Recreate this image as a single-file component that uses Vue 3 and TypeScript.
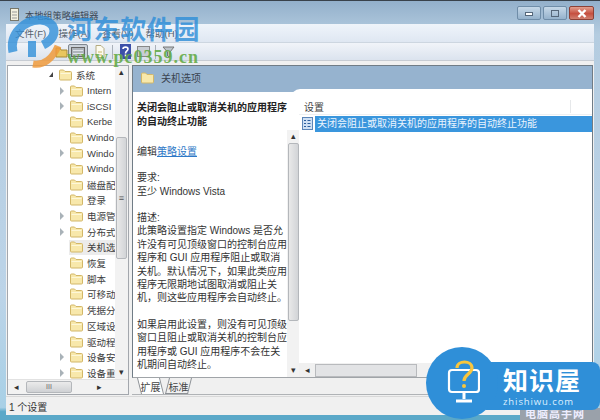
<script setup lang="ts">
type Row = { label: string; arrow?: boolean; open?: boolean; selected?: boolean }
const rows: Row[] = [
  { label: '系统', open: true },
  { label: 'Intern', arrow: true },
  { label: 'iSCSI', arrow: true },
  { label: 'Kerbe' },
  { label: 'Windo' },
  { label: 'Windo', arrow: true },
  { label: 'Windo' },
  { label: '磁盘配' },
  { label: '登录' },
  { label: '电源管', arrow: true },
  { label: '分布式', arrow: true },
  { label: '关机选', selected: true },
  { label: '恢复' },
  { label: '脚本' },
  { label: '可移动' },
  { label: '凭据分' },
  { label: '区域设' },
  { label: '驱动程' },
  { label: '设备安', arrow: true },
  { label: '设备重', arrow: true },
]
const menus = ['文件(F)', '操作(A)', '查看(V)', '帮助(H)']
</script>

<template>
  <div class="window">
    <header class="titlebar">
      <svg class="appicon" width="10" height="13" viewBox="0 0 10 13"><rect x=".5" y=".5" width="8" height="12" fill="#f4f1df" stroke="#77776a"/><path d="M2 4h5M2 7h5M2 10h5" stroke="#999"/></svg>
      <span class="title">本地组策略编辑器</span>
      <div class="controls">
        <span class="ctl"><i class="min"></i></span>
        <span class="ctl"><i class="max"></i></span>
        <span class="ctl close">
          <svg width="10" height="9" viewBox="0 0 10 9"><path d="M1.500 1l7 7M8.500 1l-7 7" stroke="#fff" stroke-width="2.400"/></svg>
        </span>
      </div>
    </header>

    <div class="body">
      <nav class="menubar">
        <span v-for="m in menus" :key="m" class="menu">{{ m }}</span>
      </nav>
      <div class="toolbar">
        <svg class="t-folder" width="13" height="12" viewBox="0 0 13 12"><path d="M1 2h4l1 2h6v7H1z" fill="#e8c65f" stroke="#a88b35"/></svg>
        <span class="tool-active"><svg width="14" height="10" viewBox="0 0 14 10"><rect x=".5" y=".5" width="13" height="9" fill="#aeb4bb" stroke="#666"/><path d="M2 3.500h10M2 6.500h10" stroke="#dfe3e8"/></svg></span>
        <svg class="t-doc" width="10" height="13" viewBox="0 0 10 13"><path d="M1 .500h5l3 3v9H1z" fill="#fdfbee" stroke="#b5ab80"/><path d="M3 7h4M3 10h4" stroke="#c8b86a"/></svg>
        <i class="sep s1"></i>
        <svg class="t-help" width="11" height="15" viewBox="0 0 11 15"><rect width="11" height="15" fill="#3c50a8"/><path d="M3 5C3 2.500 8 2.500 8 5 8 7 5.500 7 5.500 9.500M5.500 10.500v2" stroke="#fff" stroke-width="1.600" fill="none"/></svg>
        <svg class="t-gray" width="13" height="11" viewBox="0 0 13 11"><rect x=".5" y=".5" width="12" height="10" fill="#c9cdd3" stroke="#888"/></svg>
        <i class="sep s2"></i>
        <svg class="t-filter" width="13" height="13" viewBox="0 0 13 13"><path d="M1 2h11L8 7v5L5.500 11V7z" fill="#bcc3c9" stroke="#777"/></svg>
      </div>

      <main class="panes">
        <aside class="tree">
          <div class="tree-main">
            <ul class="tree-list">
              <li v-for="(r, i) in rows" :key="i" class="tree-row" :class="{ child: i > 0 }">
                <span class="arrow" :class="{ open: r.open, closed: r.arrow }"></span>
                <span class="folder-wrap" :class="{ sel: r.selected }">
                  <svg class="folder" width="13" height="12" viewBox="0 0 13 12"><path d="M.5 2Q.5 1 1.500 1h3L6 2.500h5.500q1 0 1 1V10q0 1-1 1h-10q-1 0-1-1z" fill="#f8e8ab" stroke="#d2b768"/><path d="M1.500 4.500h10" stroke="#fdf7d8"/></svg>
                </span>
                <span class="tree-label" :class="{ sel: r.selected }">{{ r.label }}</span>
              </li>
            </ul>
            <div class="vscroll tree-v">
              <span class="up">▴</span>
              <div class="track"><div class="thumb tree-thumb"><b>≡</b></div></div>
              <span class="down">▾</span>
            </div>
          </div>
          <div class="hscroll">
            <span class="h-arrow">◂</span>
            <div class="hthumb">III</div>
            <span class="h-arrow right">▸</span>
          </div>
        </aside>

        <section class="right">
          <div class="frame">
            <div class="pane-head">
              <svg width="13" height="12" viewBox="0 0 13 12"><path d="M.5 2Q.5 1 1.500 1h3L6 2.500h5.500q1 0 1 1V10q0 1-1 1h-10q-1 0-1-1z" fill="#f8e8ab" stroke="#d2b768"/></svg>
              <span>关机选项</span>
            </div>
            <div class="split">
              <article class="desc">
                <div class="desc-text">
                  <h2>关闭会阻止或取消关机的应用程序的自动终止功能</h2>
                  <p>编辑<a>策略设置</a></p>
                  <p>要求:<br />至少 Windows Vista</p>
                  <p>描述:<br />此策略设置指定 Windows 是否允许没有可见顶级窗口的控制台应用程序和 GUI 应用程序阻止或取消关机。默认情况下，如果此类应用程序无限期地试图取消或阻止关机，则这些应用程序会自动终止。</p>
                  <p>如果启用此设置，则没有可见顶级窗口且阻止或取消关机的控制台应用程序或 GUI 应用程序不会在关机期间自动终止。</p>
                </div>
                <div class="vscroll desc-v">
                  <span class="up">▴</span>
                  <div class="track"><div class="thumb desc-thumb"></div></div>
                  <span class="down">▾</span>
                </div>
              </article>
              <div class="list">
                <div class="list-head"><span>设置</span><i class="col-line"></i></div>
                <div class="list-row">
                  <svg width="11" height="13" viewBox="0 0 11 13"><rect x=".5" y=".5" width="10" height="12" fill="#cfe0f4" stroke="#5d86b8"/><path d="M2 3.500h2M2 6.500h2M2 9.500h2M5.500 3.500h3M5.500 6.500h3M5.500 9.500h3" stroke="#2c5f9e"/></svg>
                  <span class="hl">关闭会阻止或取消关机的应用程序的自动终止功能</span>
                </div>
                <div class="list-scroll"><span class="h-arrow">◂</span><div class="list-thumb"></div></div>
              </div>
            </div>
          </div>
          <div class="tabs">
            <span class="tab on">扩展</span>
            <span class="tab">标准</span>
          </div>
        </section>
      </main>
      <footer class="status">1 个设置</footer>
    </div>

    <!-- watermarks that lie over the screenshot -->
    <svg class="wm-logo" width="62" height="56" viewBox="0 0 62 56">
      <path d="M8 38C4 20 20 5 36 6c8 1 13 5 13 11 0 6-5 11-11 14" fill="none" stroke="#2f8ed8" stroke-opacity=".8" stroke-width="9"/>
      <path d="M27 27v16" fill="none" stroke="#2f8ed8" stroke-opacity=".8" stroke-width="8"/>
      <path d="M28 50c11 2 20-6 25-18" fill="none" stroke="#ef9a3c" stroke-opacity=".85" stroke-width="7"/>
    </svg>
    <div class="wm-name">河东软件园</div>
    <div class="wm-url">www.pc0359.cn</div>

    <div class="gray-mark">电脑高手网</div>
    <div class="badge">
      <div class="badge-circle">
        <svg width="36" height="46" viewBox="0 0 36 46">
          <rect x="5" y="10" width="30" height="22" rx="3" fill="none" stroke="#fff" stroke-width="2.200"/>
          <path d="M20 33v6M12 41h16" stroke="#fff" stroke-width="3"/>
          <path d="M13 8C13 0 28 0 28 8c0 6-8 6-8 13" fill="none" stroke="#f8c63d" stroke-width="3.200"/>
          <circle cx="20" cy="26" r="2" fill="#f8c63d"/>
        </svg>
      </div>
      <div class="badge-text">
        <strong>知识屋</strong>
        <small>zhishiwu.com</small>
      </div>
    </div>
  </div>
</template>

<style>
html, body { margin: 0; background: #31424f; }
</style>

<style scoped>
.window {
  position: relative;
  width: 600px;
  height: 420px;
  overflow: hidden;
  display: flex;
  flex-direction: column;
  box-sizing: border-box;
  padding: 0 6px 5px 6px;
  background: linear-gradient(180deg, #93b0cb 0%, #b4cce0 8%, #bcd4e8 70%, #a8d0e6 97%, #5aa8c8 98%);
  border-top: 1px solid #39424b;
  font-family: "Liberation Sans", "Noto Sans CJK SC", sans-serif;
  font-size: 10px;
  color: #2a2a2a;
}
.titlebar {
  height: 23px;
  flex: none;
  display: flex;
  align-items: center;
  gap: 5px;
  padding-left: 4px;
}
.title { font-size: 9.200px; color: #3c4855; margin-top: 4px; }
.appicon { margin-top: 3px; }
.controls { margin-left: auto; display: flex; gap: 2px; margin-top: 1px; }
.ctl {
  width: 22px;
  height: 12px;
  border: 1px solid #6f8da8;
  border-radius: 2px;
  background: linear-gradient(180deg, #c6d8e8, #95b2cc);
  display: flex;
  align-items: center;
  justify-content: center;
}
.ctl i { display: block; box-sizing: border-box; background: #fff; border: 1px solid #55677a; }
.ctl .min { width: 8px; height: 4px; margin-top: 2px; }
.ctl .max { width: 8px; height: 7px; background: transparent; }
.ctl.close {
  width: 23px;
  border-color: #8d4136;
  background: linear-gradient(180deg, #e2a08f, #c65040 55%, #d08070);
}
.body { flex: 1; min-height: 0; display: flex; flex-direction: column; background: #f0f0f0; }
.menubar {
  height: 19px;
  flex: none;
  display: flex;
  align-items: center;
  padding-left: 9px;
  background: linear-gradient(180deg, #eff4fa, #dfe7f2);
  border-bottom: 1px solid #cdd6e0;
  box-sizing: border-box;
  color: #55606b;
}
.menu { width: 43.500px; white-space: nowrap; font-size: 9.500px; }
.toolbar {
  height: 18px;
  flex: none;
  display: flex;
  align-items: center;
  padding-left: 49px;
  background: linear-gradient(180deg, #f1f4f9, #dbe3ee);
  border-bottom: 1px solid #c7ccd3;
  box-sizing: border-box;
}
.tool-active {
  display: flex;
  box-sizing: border-box;
  width: 20px;
  height: 15px;
  justify-content: center;
  align-items: center;
  border: 1px solid #7f8790;
  border-radius: 2px;
  background: #cbd2da;
}
.t-doc { margin-left: 7px; }
.sep { width: 1px; height: 14px; background: #aab1ba; flex: none; }
.s1 { margin-left: 7px; }
.t-help { margin-left: 7px; }
.t-gray { margin-left: 6px; }
.s2 { margin-left: 5px; }
.t-filter { margin-left: 6px; }
.panes {
  flex: 1;
  min-height: 0;
  display: flex;
  gap: 3px;
  padding: 4px 1px 1px 1px;
  background: #f0f0f0;
}
.tree {
  width: 122px;
  flex: none;
  display: flex;
  flex-direction: column;
  border: 1px solid #a3a7ad;
  box-sizing: border-box;
  background: #fff;
}
.tree-main { flex: 1; min-height: 0; display: flex; }
.tree-list { flex: 1; min-width: 0; margin: 0; padding: 1px 0 0 0; list-style: none; overflow: hidden; }
.tree-row {
  height: 15.700px;
  display: flex;
  align-items: center;
  padding-left: 38px;
  white-space: nowrap;
  overflow: hidden;
}
.tree-row.child { padding-left: 53px; }
.arrow { width: 8px; flex: none; margin-left: -1px; margin-right: 1px; height: 8px; box-sizing: border-box; }
.arrow.closed { border-left: 4px solid #a9b2b8; border-top: 4px solid transparent; border-bottom: 4px solid transparent; }
.arrow.open { width: 0; height: 0; border-left: 4px solid transparent; border-bottom: 5px solid #444; margin-right: 5px; margin-left: 3px; }
.folder-wrap { display: flex; height: 15px; align-items: center; padding-left: 1px; flex: none; }
.folder-wrap.sel { background: #ececec; }
.tree-label { padding-left: 4px; font-size: 9.500px; color: #3d3d3d; }
.tree-label.sel { background: #ececec; flex: 1; line-height: 15px; }
.vscroll { flex: none; display: flex; flex-direction: column; align-items: center; background: #f2f2f2; }
.tree-v { width: 13px; }
.up, .down { height: 13px; flex: none; line-height: 13px; font-size: 9px; color: #333; }
.track { flex: 1; width: 100%; min-height: 0; }
.thumb {
  box-sizing: border-box;
  margin: 0 auto;
  width: 11px;
  border: 1px solid #b4b7bb;
  border-radius: 2px;
  background: linear-gradient(90deg, #e9e9e9, #d2d4d7);
  text-align: center;
}
.tree-thumb { height: 122px; margin-top: 58px; padding-top: 55px; line-height: 10px; font-size: 9px; }
.tree-thumb b { font-weight: 400; color: #555; }
.hscroll { height: 15px; flex: none; display: flex; align-items: center; background: #f2f2f2; border-top: 1px solid #e2e2e2; box-sizing: border-box; }
.h-arrow { width: 16px; text-align: center; font-size: 9px; color: #333; flex: none; }
.h-arrow.right { margin-left: auto; margin-right: 2px; }
.hthumb {
  width: 46px; height: 12px; margin-left: 2px;
  box-sizing: border-box;
  border: 1px solid #b4b7bb; border-radius: 2px;
  background: linear-gradient(180deg, #ebebeb, #cfd1d4);
  text-align: center; font-size: 7px; line-height: 10px; color: #666;
}
.right { flex: 1; min-width: 0; display: flex; flex-direction: column; }
.frame { flex: 1; min-height: 0; display: flex; flex-direction: column; border: 1px solid #707c86; border-bottom-color: #a0a4a8; background: #fff; }
.pane-head {
  height: 26px;
  flex: none;
  box-sizing: border-box;
  padding: 0 0 3px 8px;
  display: flex;
  align-items: center;
  gap: 7px;
  background: #96b3cf;
  color: #3a4350;
  font-size: 10px;
}
.split { flex: 1; min-height: 0; display: flex; background: #fff; }
.desc { width: 166px; flex: none; display: flex; background: #fff; box-sizing: border-box; }
.desc-text { flex: 1; min-width: 0; padding: 9px 0 0 4px; font-size: 10px; line-height: 13.400px; color: #333; }
.desc-text h2 { margin: 0 0 16px; font-size: 10px; font-weight: 700; line-height: 14px; color: #222; }
.desc-text p { margin: 0 0 12.900px; }
.desc-text a { color: #2f79c7; text-decoration: underline; }
.desc-v { width: 12px; margin-top: 38px; }
.desc-thumb { height: 178px; }
.list {
  position: relative;
  flex: 1;
  min-width: 0;
  display: flex;
  flex-direction: column;
  background: #fff;
}
.list::before {
  content: "";
  position: absolute;
  left: -8px;
  right: 0;
  top: -3px;
  height: 12px;
  background: #fff;
  border-top-left-radius: 9px;
}
.list-head {
  position: relative;
  height: 23px;
  flex: none;
  box-sizing: border-box;
  padding: 6px 0 0 5px;
  display: flex;
  align-items: center;
  font-size: 10px;
  color: #444;
  border-bottom: 1px solid #eef0f2;
}
.col-line { margin-left: auto; margin-right: 21px; width: 1px; height: 13px; background: #e6e8ea; }
.list-row { display: flex; align-items: center; gap: 2px; padding-left: 3px; height: 17px; flex: none; }
.hl {
  flex: 1;
  height: 16px;
  line-height: 16px;
  padding-left: 2px;
  background: #3a96dd;
  color: #eaf4fd;
  font-size: 10px;
}
.list-scroll { margin-top: auto; height: 14px; display: flex; align-items: center; background: #f0f0f0; }
.list-thumb { width: 100px; height: 11px; border: 1px solid #b8babd; background: #e2e3e5; }
.tabs {
  height: 16px;
  flex: none;
  display: flex;
  padding-left: 7px;
  gap: 5px;
  background: #f0f0f0;
  border-bottom: 1px solid #b0b3b6;
}
.tab {
  position: relative;
  z-index: 0;
  display: flex;
  align-items: center;
  width: 23px;
  justify-content: center;
  font-size: 10px;
  color: #444;
}
.tab::before {
  content: "";
  position: absolute;
  inset: 0 0 0 0;
  z-index: -1;
  border-left: 1px solid #8d9196;
  border-right: 1px solid #8d9196;
  border-bottom: 1px solid #8d9196;
  transform: skewX(14deg);
}
.tab.on::before { background: #fff; transform: skewX(14deg); border-bottom: none; }
.tab:not(.on)::before { transform: skewX(-14deg); background: #f0f0f0; }
.status {
  height: 19px;
  flex: none;
  display: flex;
  align-items: flex-start;
  padding: 2px 0 0 3px;
  background: #f0f0f0;
  border-top: 1px solid #d8d8d8;
  box-sizing: border-box;
  font-size: 10px;
  color: #333;
}
.wm-logo { position: absolute; left: 5px; top: 13px; }
.wm-name {
  position: absolute;
  left: 67px;
  top: 14px;
  font-size: 26px;
  line-height: 30px;
  font-weight: 700;
  letter-spacing: .6px;
  color: rgba(47, 142, 216, .82);
}
.wm-url {
  position: absolute;
  left: 67px;
  top: 47px;
  font-family: "Liberation Serif", serif;
  font-size: 18px;
  line-height: 18px;
  font-weight: 700;
  letter-spacing: 1px;
  color: rgba(98, 170, 70, .9);
}
.gray-mark {
  position: absolute;
  right: 0;
  bottom: 0;
  width: 80px;
  height: 12px;
  line-height: 12px;
  padding-left: 5px;
  box-sizing: border-box;
  background: #9aa1aa;
  color: #eef;
  font-size: 11px;
  font-weight: 700;
  letter-spacing: 1px;
}
.badge {
  position: absolute;
  left: 426px;
  top: 346px;
  width: 174px;
  height: 72px;
}
.badge::before {
  content: "";
  position: absolute;
  left: 60px;
  right: 0;
  top: 15px;
  height: 48px;
  border-radius: 0 8px 8px 0;
  background: #2f8fd8;
}
.badge-circle {
  position: absolute;
  left: 0;
  top: 0;
  width: 72px;
  height: 72px;
  border-radius: 50%;
  background: #2f8fd8;
  display: flex;
  align-items: center;
  justify-content: center;
}
.badge-text {
  position: absolute;
  left: 77px;
  top: 20px;
  color: #fff;
  display: flex;
  flex-direction: column;
}
.badge-text strong { font-size: 25px; line-height: 29px; letter-spacing: 1px; font-weight: 700; }
.badge-text small { font-size: 9.500px; line-height: 11px; letter-spacing: .9px; font-family: "Open Sans", sans-serif; color: #dfefff; }
</style>
